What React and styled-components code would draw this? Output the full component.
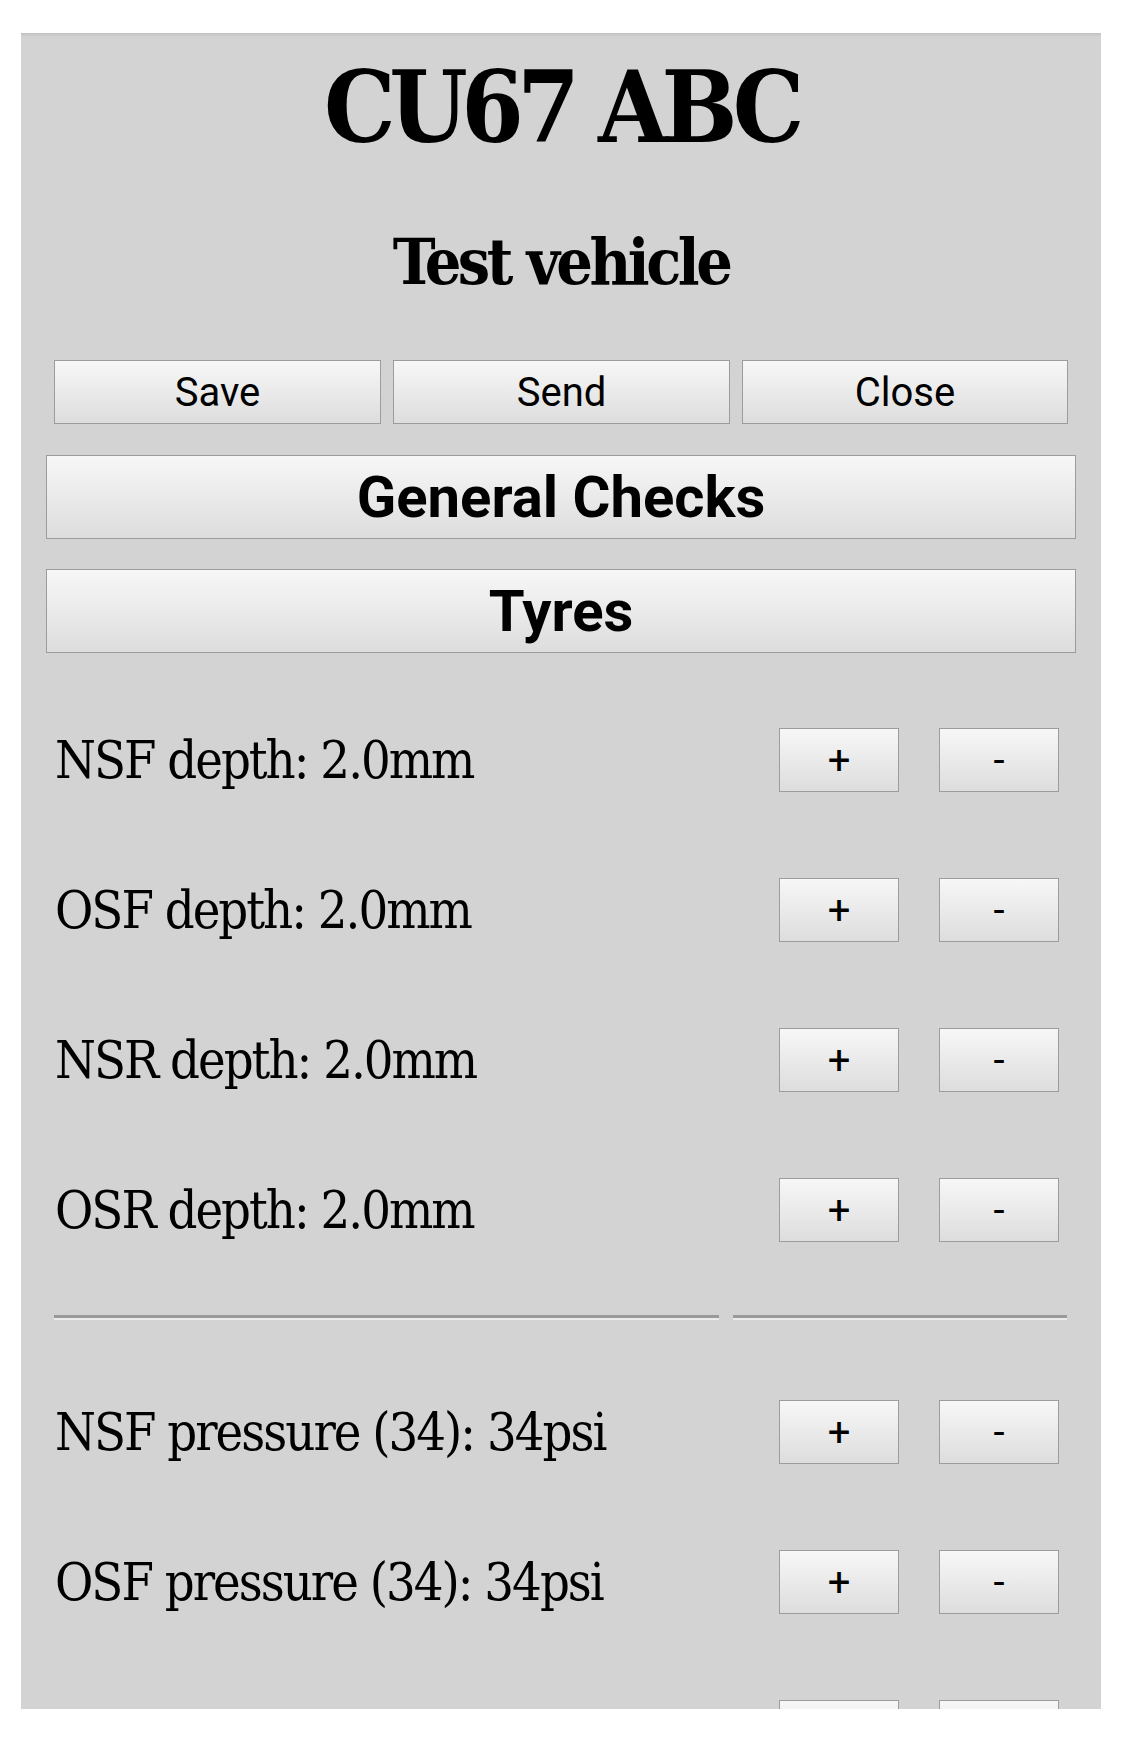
import React from 'react';
import styled, { createGlobalStyle } from 'styled-components';

const GlobalStyle = createGlobalStyle`
  body {
    margin: 0;
    background: #ffffff;
  }
`;

const serif = `"DejaVu Serif Condensed", "DejaVu Serif", serif`;

const Panel = styled.div`
  margin: 33px 22px 0 21px;
  height: 1676px;
  overflow: hidden;
  background: #d3d3d3;
  box-shadow: inset 0 4px 3px -2px rgba(0, 0, 0, 0.08);
`;

const Title = styled.h1`
  margin: 16px 0 0;
  font-family: ${serif};
  font-stretch: condensed;
  font-weight: bold;
  font-size: 100px;
  letter-spacing: -6.5px;
  line-height: 116px;
  text-align: center;
  color: #000;
`;

const Subtitle = styled.h2`
  margin: 60px 0 0;
  font-family: ${serif};
  font-stretch: condensed;
  font-weight: bold;
  font-size: 64px;
  letter-spacing: -3.5px;
  line-height: 74px;
  text-align: center;
  color: #000;
`;

const Toolbar = styled.div`
  display: grid;
  grid-template-columns: 327fr 337fr 326fr;
  gap: 12px;
  margin: 61px 33px 0;
`;

const Button = styled.button`
  display: flex;
  align-items: center;
  justify-content: center;
  box-sizing: border-box;
  margin: 0;
  padding: 0;
  border: 1px solid #9c9c9c;
  border-radius: 0;
  background: linear-gradient(to bottom, #f7f7f7, #dddddd);
  font-family: Roboto, "Liberation Sans", sans-serif;
  color: #000;
  height: ${p => p.$tall ? '84px' : '64px'};
  font-size: ${p => p.$big ? '58px' : '40px'};
  font-weight: ${p => p.$big ? 700 : 400};
`;

const Section = styled(Button)`
  width: auto;
  margin: ${p => p.$first ? '31px' : '30px'} 25px 0;
`;

const Table = styled.div`
  margin-top: 32px;
  padding: 0 42px 0 33px;
`;

const Row = styled.div`
  display: grid;
  grid-template-columns: 665px 334px;
  column-gap: 14px;
  align-items: center;
  height: 150px;
`;

const Label = styled.span`
  font-family: ${serif};
  font-stretch: condensed;
  font-size: 52px;
  letter-spacing: -2px;
  color: #000;
  white-space: nowrap;
  padding-left: 1px;
`;

const Steppers = styled.div`
  display: flex;
  justify-content: flex-end;
  gap: 40px;
  padding-right: 8px;
`;

const Step = styled(Button)`
  width: 120px;
`;

const DividerRow = styled.div`
  display: grid;
  grid-template-columns: 665px 334px;
  column-gap: 14px;
  align-items: start;
  height: 72px;
`;

const Rule = styled.hr`
  margin: 30px 0 0;
  height: 0;
  border: 0;
  border-top: 3px solid #999999;
  border-bottom: 2px solid #ececec;
`;

const depths = ['NSF', 'OSF', 'NSR', 'OSR'];
const pressures = ['NSF', 'OSF', 'NSR', 'OSR'];

const ValueRow = ({ text }) => (
  <Row>
    <Label>{text}</Label>
    <Steppers>
      <Step>+</Step>
      <Step>-</Step>
    </Steppers>
  </Row>
);

const App = () => {
  return (
    <>
      <GlobalStyle />
      <Panel>
        <Title>CU67 ABC</Title>
        <Subtitle>Test vehicle</Subtitle>
        <Toolbar>
          <Button>Save</Button>
          <Button>Send</Button>
          <Button>Close</Button>
        </Toolbar>
        <Section $first $tall $big as="div">General Checks</Section>
        <Section $tall $big as="div">Tyres</Section>
        <Table>
          {depths.map(d => (
            <ValueRow key={d} text={`${d} depth: 2.0mm`} />
          ))}
          <DividerRow>
            <Rule />
            <Rule />
          </DividerRow>
          {pressures.map(p => (
            <ValueRow key={p} text={`${p} pressure (34): 34psi`} />
          ))}
        </Table>
      </Panel>
    </>
  );
};

export default App;
